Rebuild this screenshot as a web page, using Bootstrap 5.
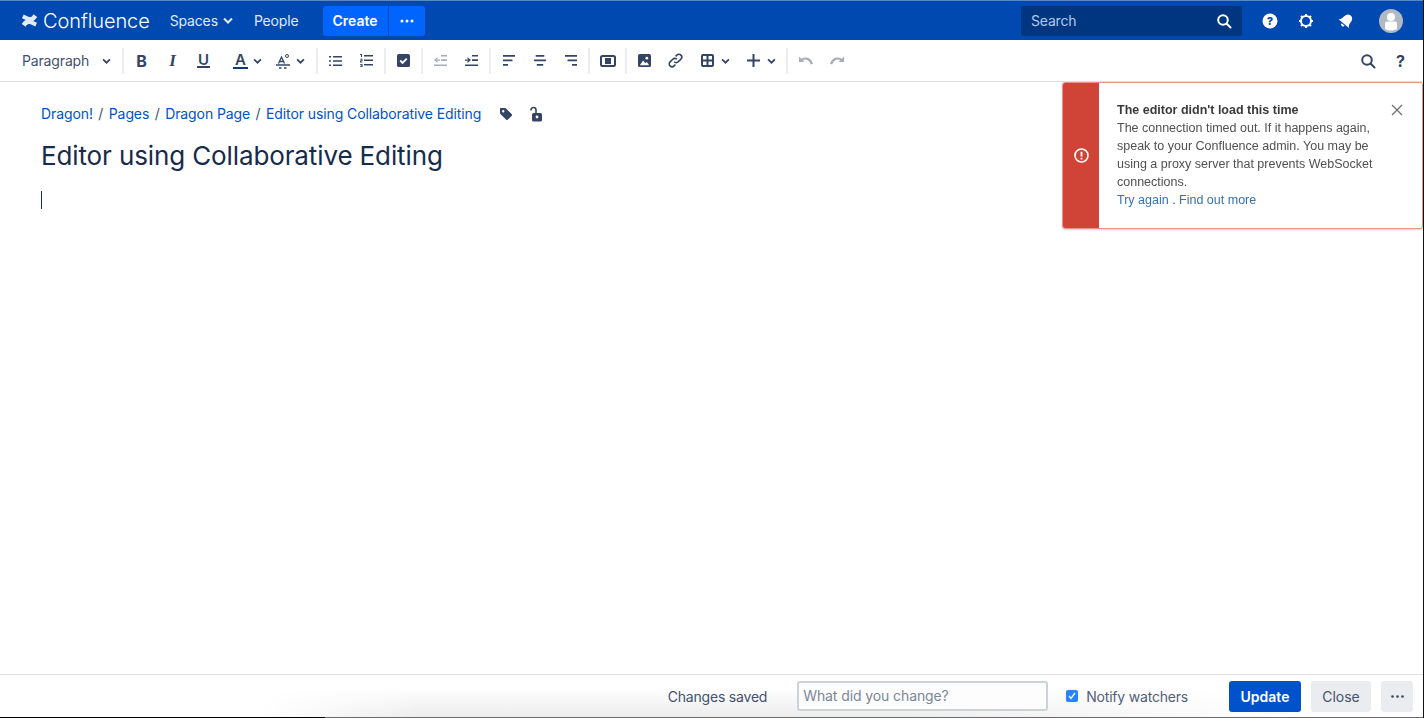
<!DOCTYPE html>
<html lang="en">
<head>
<meta charset="utf-8">
<title>Editor using Collaborative Editing</title>
<link href="https://cdn.jsdelivr.net/npm/bootstrap@5.3.0/dist/css/bootstrap.min.css" rel="stylesheet">
<style>
html,body{height:100%;overflow:hidden}
body{font-family:Inter,"Liberation Sans",sans-serif;color:#172b4d;background:#fff;font-size:14px}
.app-shell{height:718px;position:relative;border-right:1px solid #111}
.topbar{height:40px;background:#0049b0;border-top:1px solid #5a86cc;padding-left:21px;padding-right:20px;color:#deebff}
.brand-name{font-size:20px;font-weight:300;color:#fff;letter-spacing:-.1px;margin-left:5px}
.top-link{color:#deebff;font-size:14px;font-weight:400;text-decoration:none;letter-spacing:-.15px}
.nav-spaces{margin-left:20px;gap:5px}
.nav-people{margin-left:21px}
.create-group{margin-left:24px;height:30px}
.create-btn{background:#0065ff;color:#fff;font-weight:600;font-size:14px;border:0;border-radius:3px 0 0 3px;width:65px;height:30px;padding:0}
.create-more{background:#0065ff;border:0;border-left:1px solid #0049b0;border-radius:0 3px 3px 0;width:37px;height:30px;padding:0;color:#fff}
.search-box{width:221px;height:30px;background:#003580;border-radius:3px;color:#b3c9ea;font-size:14px;padding:0 10px;letter-spacing:-.2px}
.top-icon{width:16px;height:16px;display:block;flex:none}
.gap-a{margin-left:20px}.gap-b{margin-left:24px}.gap-c{margin-left:25px}
.toolbar{height:42px;border-bottom:1px solid #dfe1e6;padding-left:22px;padding-right:7px}
.para-drop{width:98px;height:32px;color:#42526e;font-size:14px;letter-spacing:-.15px}
.para-chev{margin-right:9px}
.tb-sep{width:2px;height:26px;background:#ebecf0;margin:0 2px;flex:none}
.tb-btn{width:31px;height:32px;flex:none;color:#344563}
.w-52{width:52px}.w-43{width:43px}.w-46{width:46px}.w-47{width:47px}
.a-wrap{padding-left:5px;gap:5px}
.a2-wrap{padding-left:4px;gap:5px}
.tbl-wrap{padding-left:10px;gap:7px}
.chev{flex:none}
.letter{font-size:16px;line-height:1;color:#344563}
.letter-i{font-family:"Liberation Serif",serif;font-size:17px}
.mark-u{font-size:15px;line-height:13px;font-weight:600;color:#344563;border-bottom:2px solid #344563;padding:0 1px}
.mark-a{font-size:15px;line-height:14px;font-weight:600;color:#344563;border-bottom:2px solid #0a3a78;padding:0 2px}
.tb-find{margin-right:2px}
.tb-help{font-size:16px}
.editor-area{padding:20px 41px 0}
.crumbs{font-size:14px;color:#42526e;line-height:24px;height:24px;letter-spacing:-.1px}
.crumbs a{color:#0052cc;text-decoration:none}
.crumb-sep{margin:0 5.5px}
.tag-mark{margin-left:18px}.lock-mark{margin-left:16px}
.page-title{font-size:26px;font-weight:400;line-height:34px;color:#172b4d;margin:13px 0 0;letter-spacing:-.12px}
.caret-line{width:1px;height:18px;background:#172b4d;margin-top:18px}
.flag-box{position:absolute;z-index:3;left:1062px;top:82px;width:361px;height:147px;border:1px solid #e8948c;border-radius:3px;background:#fff;box-shadow:0 1px 2px rgba(9,30,66,.2);font-family:"Liberation Sans",Arial,sans-serif;font-size:12.5px;line-height:18px;color:#505050;overflow:hidden;filter:blur(.3px)}
.flag-side{width:36px;background:#d04437;flex:none}
.flag-text{padding:18px 40px 0 18px;flex:1}
.flag-title{font-weight:700;color:#3a3a3a}
.flag-text a{color:#3572b0;text-decoration:none}
.flag-close{position:absolute;right:19px;top:21px;display:block}
.bottombar{position:absolute;left:0;right:0;top:674px;height:44px;border-top:1px solid #dfe1e6;padding:0 10px 1px 0;background:
 linear-gradient(90deg,#000 0,#000 325px,#6a6a6a 325px) bottom/100% 1px no-repeat,
 linear-gradient(90deg,#fff 260px,rgba(255,255,255,0) 420px,rgba(255,255,255,0) 900px,#fff 1300px),
 linear-gradient(180deg,#fff 30%,#ececec 100%)}
.saved-text{font-size:14px;color:#42526e;margin-right:30px;letter-spacing:-.2px}
.change-input{width:251px;height:30px;border:2px solid #cdd1d8;border-radius:3px;font-size:14px;padding:0 4px;color:#7a869a;background:#fdfdfd;line-height:26px;margin-right:18px;letter-spacing:-.1px}
.notify-wrap{font-size:14px;color:#505f79;margin-right:41px;letter-spacing:-.2px}
.tick-box{width:12px;height:12px;background:#2684ff;border-radius:2px;margin-right:8px}
.btn-update{background:#0052cc;color:#fff;font-weight:600;font-size:14px;border:0;border-radius:3px;width:72px;height:31px;padding:0}
.btn-close-page{background:#ebecf0;color:#42526e;font-size:14px;border:0;border-radius:3px;width:60px;height:31px;padding:0;margin-left:10px}
.btn-more-page{background:#ebecf0;color:#344563;border:0;border-radius:3px;width:32px;height:31px;padding:0;margin-left:10px}
</style>
</head>
<body>
<div class="app-shell">
  <header class="topbar d-flex align-items-center">
    <svg width="17" height="15" viewBox="0 0 16 15" fill="#deebff"><path d="M.3 11C3 6.800 6 5.400 9.500 7l6 2.800-1.600 3.700-4.900-2.200C7 10.400 5.600 11 4 13.800z"/><path d="M.3 11C3 6.800 6 5.400 9.500 7l6 2.800-1.600 3.700-4.900-2.200C7 10.400 5.600 11 4 13.800z" transform="rotate(180 8 7.500)"/></svg>
    <span class="brand-name">Confluence</span>
    <a href="#" class="top-link d-flex align-items-center nav-spaces"><span>Spaces</span>
      <svg class="chev" width="10" height="7" viewBox="0 0 10 7" fill="none" stroke="#deebff" stroke-width="2"><path d="M1 1.500l4 4 4-4"/></svg></a>
    <a href="#" class="top-link nav-people">People</a>
    <div class="create-group d-flex">
      <button class="create-btn">Create</button>
      <button class="create-more d-flex align-items-center justify-content-center"><svg width="14" height="4" viewBox="0 0 14 4" fill="#fff"><circle cx="2" cy="2" r="1.500"/><circle cx="7" cy="2" r="1.500"/><circle cx="12" cy="2" r="1.500"/></svg></button>
    </div>
    <div class="search-box d-flex align-items-center justify-content-between ms-auto">
      <span>Search</span>
      <svg width="16" height="16" viewBox="0 0 16 16" fill="none" stroke="#fff" stroke-width="2"><circle cx="7" cy="7" r="4.800"/><path d="M10.500 10.500l4 4" stroke-linecap="round"/></svg>
    </div>
    <svg class="top-icon gap-a" viewBox="0 0 16 16"><circle cx="8" cy="8" r="7.500" fill="#fff"/><text x="8" y="12" text-anchor="middle" font-family="Inter,sans-serif" font-size="11" font-weight="800" fill="#0049b0">?</text></svg>
    <svg class="top-icon gap-a" viewBox="0 0 16 16" fill="none" stroke="#fff"><circle cx="8" cy="8" r="5" stroke-width="2"/><path d="M8 1v2M8 13v2M1 8h2M13 8h2M3 3l1.500 1.500M11.500 11.500L13 13M13 3l-1.500 1.500M4.500 11.500L3 13" stroke-width="2"/></svg>
    <svg class="top-icon gap-b" viewBox="0 0 16 16" fill="#fff"><g transform="rotate(40 8 8)"><path d="M8 .8c3 0 4.500 2.500 4.500 5.500 0 3 1 4 2.300 5.200H1.200C2.500 10.300 3.500 9.300 3.500 6.300 3.500 3.300 5 .8 8 .8z"/><path d="M6 12.500h4a2 2 0 0 1-4 0z"/></g></svg>
    <svg class="gap-c" width="24" height="24" viewBox="0 0 24 24"><circle cx="12" cy="12" r="12" fill="#b3b9c4"/><circle cx="12" cy="8" r="4" fill="#fff"/><path d="M6 14.500q0-2 2-2h8q2 0 2 2V20q-6 3-12 0z" fill="#fff"/></svg>
  </header>

  <nav class="toolbar d-flex align-items-center">
    <div class="para-drop d-flex align-items-center justify-content-between"><span>Paragraph</span><svg class="chev para-chev" width="9" height="6" viewBox="0 0 10 7" fill="none" stroke="#344563" stroke-width="2"><path d="M1 1.500l4 4 4-4"/></svg></div>
    <span class="tb-sep"></span>
    <div class="tb-btn d-flex align-items-center justify-content-center letter fw-bold">B</div>
    <div class="tb-btn d-flex align-items-center justify-content-center letter letter-i fw-bold fst-italic">I</div>
    <div class="tb-btn d-flex align-items-center justify-content-center"><span class="mark-u">U</span></div>
    <div class="tb-btn w-52 d-flex align-items-center a-wrap justify-content-center">
      <span class="mark-a">A</span>
      <svg class="chev" width="9" height="6" viewBox="0 0 10 7" fill="none" stroke="#344563" stroke-width="2"><path d="M1 1.500l4 4 4-4"/></svg></div>
    <div class="tb-btn w-43 d-flex align-items-center a2-wrap">
      <svg width="16" height="16" viewBox="0 0 16 16" fill="none" stroke="#344563" stroke-width="1.300"><path d="M3.500 10.500L6.500 4l3 6.500M4.500 8.500h4"/><circle cx="12" cy="3" r="1.500" stroke-width="1"/><path d="M1 12h14M4 15h2.500M9 15h2.500"/></svg>
      <svg class="chev" width="9" height="6" viewBox="0 0 10 7" fill="none" stroke="#344563" stroke-width="2"><path d="M1 1.500l4 4 4-4"/></svg></div>
    <span class="tb-sep"></span>
    <div class="tb-btn d-flex align-items-center justify-content-center"><svg width="13" height="12" viewBox="0 0 13 12" fill="#344563"><path d="M0 1h2v1.600H0zM4 1h9v1.600H4zM0 5.200h2v1.600H0zM4 5.200h9v1.600H4zM0 9.400h2V11H0zM4 9.400h9V11H4z"/></svg></div>
    <div class="tb-btn d-flex align-items-center justify-content-center"><svg width="13" height="13" viewBox="0 0 13 13" fill="#344563"><path d="M4 1h9v1.600H4zM4 5.500h9v1.600H4zM4 10h9v1.600H4zM0 0h2v3H1V1H0zM0 4.800h2.500v2.400H1v.6h1.500v.7H0V6.500h1.500V5.600H0zM0 10h2.500v3H0v-.7h1.500v-.5H.7v-.6h.8v-.5H0z"/></svg></div>
    <span class="tb-sep"></span>
    <div class="tb-btn d-flex align-items-center justify-content-center"><svg width="13" height="13" viewBox="0 0 14 14"><rect width="14" height="14" rx="2" fill="#344563"/><path d="M3.500 7l2.500 2.500 4.500-4.500" fill="none" stroke="#fff" stroke-width="2"/></svg></div>
    <span class="tb-sep"></span>
    <div class="tb-btn d-flex align-items-center justify-content-center"><svg width="13" height="12" viewBox="0 0 13 12" fill="#a5adba"><path d="M7 0h6v1.600H7zM7 4.300h6v1.600H7zM0 9.400h13V11H0zM6 4.400H2.600L4 3.100 3.200 2.400 0 5.100l3.200 2.700.8-.7-1.400-1.300H6z"/></svg></div>
    <div class="tb-btn d-flex align-items-center justify-content-center"><svg width="13" height="12" viewBox="0 0 13 12" fill="#344563"><path d="M7 0h6v1.600H7zM7 4.300h6v1.600H7zM0 9.400h13V11H0zM0 4.400h3.400L2 3.100l.8-.7L6 5.100 2.800 7.800 2 7.100l1.400-1.300H0z"/></svg></div>
    <span class="tb-sep"></span>
    <div class="tb-btn d-flex align-items-center justify-content-center"><svg width="12" height="11" viewBox="0 0 12 11" fill="#344563"><path d="M0 0h12v1.700H0zM0 4.500h9.500v1.700H0zM0 9h5v1.700H0z"/></svg></div>
    <div class="tb-btn d-flex align-items-center justify-content-center"><svg width="12" height="11" viewBox="0 0 12 11" fill="#344563"><path d="M1.700 0h8.600v1.700H1.700zM0 4.500h12v1.700H0zM2.800 9h6.400v1.700H2.800z"/></svg></div>
    <div class="tb-btn d-flex align-items-center justify-content-center"><svg width="12" height="11" viewBox="0 0 12 11" fill="#344563"><path d="M0 0h12v1.700H0zM2.500 4.500H12v1.700H2.500zM7 9h5v1.700H7z"/></svg></div>
    <span class="tb-sep"></span>
    <div class="tb-btn d-flex align-items-center justify-content-center"><svg width="16" height="12" viewBox="0 0 16 12"><rect x="1" y="1" width="14" height="10" rx="1.500" fill="none" stroke="#344563" stroke-width="2"/><rect x="5" y="3" width="6" height="6" fill="#344563"/></svg></div>
    <span class="tb-sep"></span>
    <div class="tb-btn d-flex align-items-center justify-content-center"><svg width="13" height="13" viewBox="0 0 14 14"><rect width="14" height="14" rx="2" fill="#344563"/><circle cx="9.500" cy="4.500" r="1.500" fill="#fff"/><path d="M2 12l3.500-5 2.500 3 1.500-1.500L12 12z" fill="#fff"/></svg></div>
    <div class="tb-btn d-flex align-items-center justify-content-center"><svg width="15" height="15" viewBox="0 0 15 15" fill="none" stroke="#344563" stroke-width="1.600"><path d="M6.200 8.800a2.800 2.800 0 0 0 4 0l2.700-2.700a2.800 2.800 0 0 0-4-4L7.600 3.400"/><path d="M8.800 6.200a2.800 2.800 0 0 0-4 0L2.100 8.900a2.800 2.800 0 0 0 4 4l1.300-1.300"/></svg></div>
    <div class="tb-btn w-46 d-flex align-items-center tbl-wrap">
      <svg width="13" height="13" viewBox="0 0 13 13"><path d="M2 0h9a2 2 0 0 1 2 2v9a2 2 0 0 1-2 2H2a2 2 0 0 1-2-2V2a2 2 0 0 1 2-2zm0 2v3.500h3.500V2zm5.500 0v3.500H11V2zM2 7.500V11h3.500V7.500zm5.500 0V11H11V7.500z" fill="#344563" fill-rule="evenodd"/></svg>
      <svg class="chev" width="9" height="6" viewBox="0 0 10 7" fill="none" stroke="#344563" stroke-width="2"><path d="M1 1.500l4 4 4-4"/></svg></div>
    <div class="tb-btn w-47 d-flex align-items-center tbl-wrap">
      <svg width="13" height="13" viewBox="0 0 13 13" fill="#344563"><path d="M5.500 0h2v5.500H13v2H7.500V13h-2V7.500H0v-2h5.500z"/></svg>
      <svg class="chev" width="9" height="6" viewBox="0 0 10 7" fill="none" stroke="#344563" stroke-width="2"><path d="M1 1.500l4 4 4-4"/></svg></div>
    <span class="tb-sep"></span>
    <div class="tb-btn d-flex align-items-center justify-content-center"><svg width="14" height="9" viewBox="0 0 14 9" fill="#a5adba"><path d="M0 .5v5.500h5.500L3.600 4.100C6.500 2.700 10 3.500 11.800 8.500L14 7.800C12 1.500 7 .2 2.200 2.700z"/></svg></div>
    <div class="tb-btn d-flex align-items-center justify-content-center"><svg width="14" height="9" viewBox="0 0 14 9" fill="#a5adba"><path d="M14 .5v5.500H8.500l1.900-1.900C7.500 2.700 4 3.500 2.200 8.500L0 7.800C2 1.500 7 .2 11.800 2.700z"/></svg></div>
    <div class="tb-btn tb-find ms-auto d-flex align-items-center justify-content-center"><svg width="16" height="16" viewBox="0 0 16 16" fill="none" stroke="#344563" stroke-width="2"><circle cx="7" cy="7" r="4.800"/><path d="M10.500 10.500l4 4" stroke-linecap="round"/></svg></div>
    <div class="tb-btn tb-help d-flex align-items-center justify-content-center fw-bold">?</div>
  </nav>

  <main class="editor-area">
    <div class="crumbs d-flex align-items-center">
      <a href="#">Dragon!</a><span class="crumb-sep">/</span><a href="#">Pages</a><span class="crumb-sep">/</span><a href="#">Dragon Page</a><span class="crumb-sep">/</span><a href="#">Editor using Collaborative Editing</a>
      <svg class="tag-mark" width="14" height="14" viewBox="0 0 14 14" fill="#344563"><path d="M1.500 1h4.500a1.500 1.500 0 0 1 1 .4l5.600 5.600a1.300 1.300 0 0 1 0 1.900l-3.700 3.700a1.300 1.300 0 0 1-1.900 0L1.400 7a1.500 1.500 0 0 1-.4-1V1.500zM4.200 3A1.200 1.200 0 1 0 4.200 5.400 1.200 1.200 0 0 0 4.200 3z" fill-rule="evenodd"/></svg>
      <svg class="lock-mark" width="14" height="16" viewBox="0 0 14 16"><path d="M2 4.500V4a2.500 2.500 0 0 1 5 0v3" fill="none" stroke="#344563" stroke-width="1.600"/><rect x="3" y="7" width="10" height="8.500" rx="1.500" fill="#344563"/><circle cx="8" cy="11" r="1.400" fill="#fff"/></svg>
    </div>
    <h1 class="page-title">Editor using Collaborative Editing</h1>
    <div class="caret-line"></div>
  </main>

  <aside class="flag-box d-flex">
    <div class="flag-side d-flex align-items-center justify-content-center">
      <svg width="15" height="15" viewBox="0 0 15 15" fill="none" stroke="#fff" stroke-width="1.600"><circle cx="7.500" cy="7.500" r="6.500"/><path d="M7.500 3.800v4.600M7.500 9.800v1.600" stroke-width="1.800"/></svg>
    </div>
    <div class="flag-text">
      <div class="flag-title">The editor didn't load this time</div>
      <div>The connection timed out. If it happens again, speak to your Confluence admin. You may be using a proxy server that prevents WebSocket connections.</div>
      <div><a href="#">Try again</a> . <a href="#">Find out more</a></div>
    </div>
    <svg class="flag-close" width="12" height="12" viewBox="0 0 12 12" stroke="#707070" stroke-width="1.300"><path d="M1 1l10 10M11 1L1 11"/></svg>
  </aside>

  <footer class="bottombar d-flex align-items-center justify-content-end">
    <span class="saved-text">Changes saved</span>
    <div class="change-input">What did you change?</div>
    <div class="notify-wrap d-flex align-items-center">
      <span class="tick-box d-flex align-items-center justify-content-center"><svg width="8" height="8" viewBox="0 0 8 8" fill="none" stroke="#fff" stroke-width="1.300"><path d="M1 4l2 2.500L7 1"/></svg></span>
      <span>Notify watchers</span>
    </div>
    <button class="btn-update">Update</button>
    <button class="btn-close-page">Close</button>
    <button class="btn-more-page d-flex align-items-center justify-content-center"><svg width="13" height="3" viewBox="0 0 13 3" fill="#344563"><circle cx="1.500" cy="1.500" r="1.300"/><circle cx="6.500" cy="1.500" r="1.300"/><circle cx="11.500" cy="1.500" r="1.300"/></svg></button>
  </footer>
</div>
<script src="https://cdn.jsdelivr.net/npm/bootstrap@5.3.0/dist/js/bootstrap.bundle.min.js"></script>
</body>
</html>
